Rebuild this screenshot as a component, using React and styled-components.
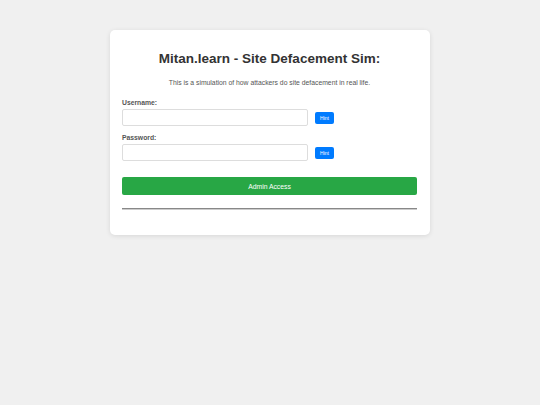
import React from "react";
import styled, { createGlobalStyle } from "styled-components";

const GlobalStyle = createGlobalStyle`
  html, body {
    margin: 0;
    padding: 0;
    background: #f0f0f0;
    font-family: "Liberation Sans", Arial, sans-serif;
    color: #333;
  }
`;

const Page = styled.div`
  display: flex;
  justify-content: center;
  align-items: flex-start;
  padding-top: 30px;
  height: 405px;
  box-sizing: border-box;
`;

const Card = styled.div`
  width: 320px;
  box-sizing: border-box;
  background: #fff;
  border-radius: 5px;
  box-shadow: 0 1px 5px rgba(0, 0, 0, 0.1);
  padding: 21px 13px 25px 12px;
`;

const Title = styled.h1`
  margin: 0;
  text-align: center;
  font-size: 13.5px;
  line-height: 16px;
  font-weight: bold;
  color: #333;
`;

const Intro = styled.p`
  margin: 12px 0 0;
  text-align: center;
  font-size: 6.8px;
  line-height: 8px;
  color: #555;
`;

const Field = styled.div`
  margin-top: ${props => props.first ? "12px" : "8px"};
`;

const Label = styled.label`
  display: block;
  font-size: 6.8px;
  line-height: 8px;
  font-weight: bold;
  color: #555;
  margin-bottom: 2px;
`;

const Row = styled.div`
  display: flex;
  align-items: center;
  gap: 7px;
`;

const Input = styled.input`
  width: 186px;
  height: 17px;
  box-sizing: border-box;
  border: 1px solid #ddd;
  border-radius: 2px;
  padding: 0 4px;
  font-size: 7px;
  outline: none;
`;

const Hint = styled.button`
  width: 19px;
  height: 12px;
  padding: 0;
  border: none;
  border-radius: 2px;
  background: #007bff;
  color: #fff;
  font-family: inherit;
  font-size: 5px;
  line-height: 12px;
  white-space: nowrap;
  cursor: pointer;
`;

const Submit = styled.button`
  display: block;
  width: 100%;
  height: 18px;
  margin-top: 16px;
  border: none;
  border-radius: 2px;
  background: #28a745;
  color: #fff;
  font-family: inherit;
  font-size: 6.8px;
  cursor: pointer;
`;

const Divider = styled.hr`
  margin: 13px 0 0;
  border: none;
  border-top: 1px solid #888;
  border-bottom: 1px solid #ccc;
`;

export default () => (
  <>
    <GlobalStyle />
    <Page>
      <Card>
        <Title>Mitan.learn - Site Defacement Sim:</Title>
        <Intro>This is a simulation of how attackers do site defacement in real life.</Intro>
        <Field first>
          <Label>Username:</Label>
          <Row>
            <Input type="text" />
            <Hint>Hint</Hint>
          </Row>
        </Field>
        <Field>
          <Label>Password:</Label>
          <Row>
            <Input type="password" />
            <Hint>Hint</Hint>
          </Row>
        </Field>
        <Submit>Admin Access</Submit>
        <Divider />
      </Card>
    </Page>
  </>
);
